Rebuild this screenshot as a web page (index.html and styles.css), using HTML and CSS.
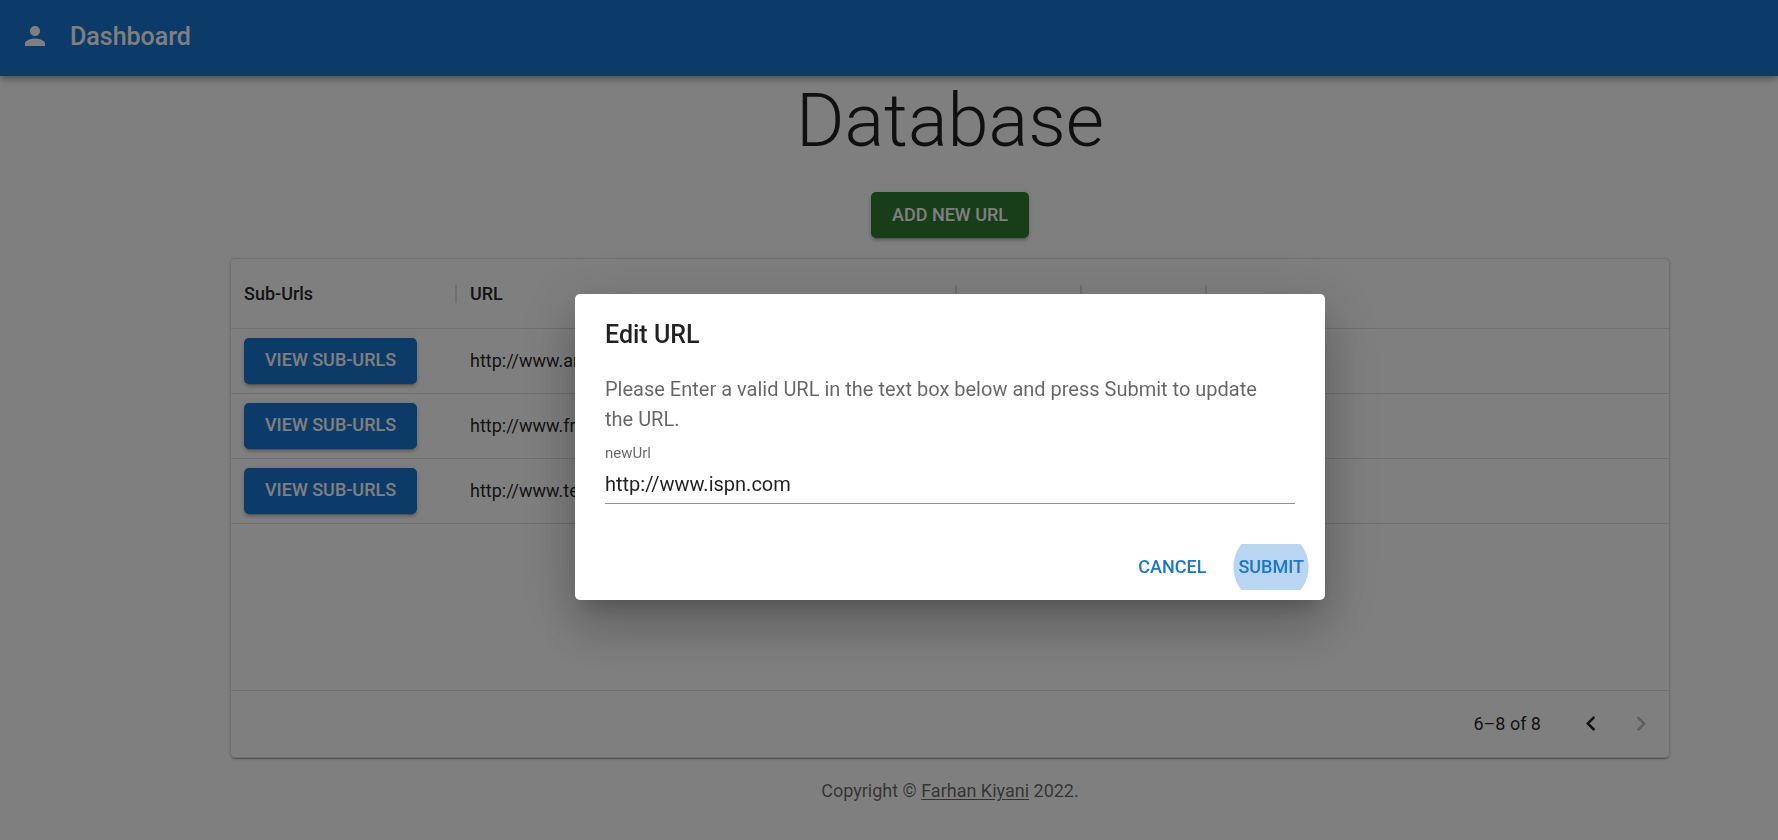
FILE: index.html
```html
<!DOCTYPE html>
<html lang="en">
<head>
<meta charset="utf-8">
<meta name="viewport" content="width=device-width, initial-scale=1">
<title>Dashboard</title>
<link rel="stylesheet" href="styles.css">
</head>
<body>
<header class="app-bar">
  <svg class="icon" viewBox="0 0 24 24" aria-hidden="true"><path d="M12 12c2.21 0 4-1.79 4-4s-1.79-4-4-4-4 1.79-4 4 1.79 4 4 4zm0 2c-2.67 0-8 1.34-8 4v2h16v-2c0-2.66-5.33-4-8-4z"/></svg>
  <span class="app-title">Dashboard</span>
</header>
<main class="page">
  <h1 class="heading">Database</h1>
  <button type="button" class="btn btn-success">ADD NEW URL</button>
  <section class="card">
    <div class="grid-body">
      <table class="grid">
        <colgroup><col class="col-sub"><col class="col-url"><col class="col-small"><col class="col-small"><col></colgroup>
        <thead>
          <tr>
            <th scope="col"><div class="head-cell"><span>Sub-Urls</span></div></th>
            <th scope="col"><div class="head-cell"><span>URL</span></div></th>
            <th scope="col"><div class="head-cell"><span></span></div></th>
            <th scope="col"><div class="head-cell"><span></span></div></th>
            <th></th>
          </tr>
        </thead>
        <tbody>
          <tr><td><button type="button" class="btn btn-primary">VIEW SUB-URLS</button></td><td>http://www.ar</td><td></td><td></td><td></td></tr>
          <tr><td><button type="button" class="btn btn-primary">VIEW SUB-URLS</button></td><td>http://www.fre</td><td></td><td></td><td></td></tr>
          <tr><td><button type="button" class="btn btn-primary">VIEW SUB-URLS</button></td><td>http://www.te</td><td></td><td></td><td></td></tr>
        </tbody>
      </table>
    </div>
    <div class="pagination">
      <span class="range">6–8 of 8</span>
      <button type="button" class="icon-btn" aria-label="Previous page"><svg class="icon" viewBox="0 0 24 24" aria-hidden="true"><path d="M15.41 16.09l-4.58-4.59 4.58-4.59L14 5.5l-6 6 6 6z"/></svg></button>
      <button type="button" class="icon-btn" aria-label="Next page" disabled><svg class="icon" viewBox="0 0 24 24" aria-hidden="true"><path d="M8.59 16.34l4.58-4.59-4.58-4.59L10 5.75l6 6-6 6z"/></svg></button>
    </div>
  </section>
  <footer class="copyright">Copyright © <a href="#">Farhan Kiyani</a> 2022.</footer>
</main>
<div class="backdrop">
  <form class="dialog" role="dialog" aria-modal="true" aria-labelledby="dialog-title">
    <h2 class="dialog-title" id="dialog-title">Edit URL</h2>
    <div class="dialog-content">
      <p class="dialog-text">Please Enter a valid URL in the text box below and press Submit to update the URL.</p>
      <label class="field-label" for="new-url">newUrl</label>
      <input class="field" id="new-url" type="text" value="http://www.ispn.com">
    </div>
    <div class="dialog-actions">
      <button type="button" class="btn btn-text">CANCEL</button>
      <button type="button" class="btn btn-text btn-ripple">SUBMIT</button>
    </div>
  </form>
</div>
</body>
</html>
```
FILE: styles.css
```css
* { box-sizing: border-box; }

:root {
  --page-inset: 122px;
  --text: rgba(0, 0, 0, 0.87);
  --muted: rgba(0, 0, 0, 0.6);
  --line: #e0e0e0;
  --primary: #1976d2;
}

body {
  margin: 0;
  background: #fff;
  color: var(--text);
  font-family: Roboto, "Liberation Sans", sans-serif;
  font-size: 18px;
}

.icon {
  display: block;
  width: 30px;
  height: 30px;
  fill: currentColor;
}

.app-bar {
  position: relative;
  display: flex;
  align-items: center;
  gap: 20px;
  height: 76px;
  padding: 0 20px 4px;
  background: var(--primary);
  color: #fff;
  box-shadow: 0 2px 5px -1px rgba(0, 0, 0, 0.2), 0 5px 6px rgba(0, 0, 0, 0.14), 0 1px 12px rgba(0, 0, 0, 0.12);
}

.app-title {
  font-size: 25px;
  font-weight: 500;
}

.page {
  display: flex;
  flex-direction: column;
  align-items: center;
  padding-left: var(--page-inset);
}

.heading {
  margin: 0 0 26px;
  font-size: 74px;
  font-weight: 300;
  line-height: 90px;
}

.btn {
  height: 46px;
  padding: 0 21px 2px;
  border: 0;
  border-radius: 5px;
  color: #fff;
  font-family: inherit;
  font-size: 18px;
  font-weight: 500;
  white-space: nowrap;
  box-shadow: 0 4px 1px -3px rgba(0, 0, 0, 0.2), 0 3px 3px rgba(0, 0, 0, 0.14), 0 1px 6px rgba(0, 0, 0, 0.12);
}

.btn-success { background: #2e7d32; }

.btn-primary {
  display: block;
  background: var(--primary);
}

.card {
  width: calc(100% - 108px);
  max-width: 1440px;
  margin-top: 20px;
  margin-right: auto;
  margin-left: auto;
  border: 1px solid var(--line);
  border-radius: 5px;
  box-shadow: 0 3px 1px -2px rgba(0, 0, 0, 0.2), 0 1px 1px rgba(0, 0, 0, 0.14), 0 1px 4px rgba(0, 0, 0, 0.12);
}

.grid-body { min-height: 431px; }

.grid {
  width: 100%;
  table-layout: fixed;
  border-collapse: separate;
  border-spacing: 0;
}

.col-sub { width: 226px; }
.col-url { width: 500px; }
.col-small { width: 125px; }

.grid th,
.grid td {
  padding: 0 0 0 13px;
  border-bottom: 1px solid var(--line);
  text-align: left;
}

.grid th {
  height: 70px;
  font-weight: 500;
}

.grid td {
  height: 65px;
  padding-bottom: 1px;
}

.head-cell {
  display: flex;
  align-items: center;
  justify-content: space-between;
}

.head-cell::after {
  content: "";
  width: 2px;
  height: 18px;
  background: var(--line);
}

.pagination {
  display: flex;
  align-items: center;
  justify-content: flex-end;
  height: 67px;
  padding-right: 3px;
  padding-bottom: 1px;
  border-top: 1px solid var(--line);
}

.range { margin-right: 25px; }

.icon-btn {
  padding: 10px;
  border: 0;
  background: none;
  color: var(--text);
}

.icon-btn:disabled { color: rgba(0, 0, 0, 0.26); }

.copyright {
  margin-top: 20px;
  color: var(--muted);
  line-height: 25px;
}

.copyright a {
  color: inherit;
  text-underline-offset: 2px;
}

.backdrop {
  position: fixed;
  inset: 0;
  display: flex;
  align-items: flex-start;
  justify-content: center;
  padding: 294px 0 0 var(--page-inset);
  background: rgba(0, 0, 0, 0.5);
}

.dialog {
  width: 100%;
  max-width: 750px;
  border-radius: 5px;
  background: #fff;
  box-shadow: 0 14px 19px -9px rgba(0, 0, 0, 0.2), 0 30px 48px 4px rgba(0, 0, 0, 0.14), 0 11px 58px 10px rgba(0, 0, 0, 0.12);
}

.dialog-title {
  margin: 0;
  padding: 21px 30px 19px;
  font-size: 25px;
  font-weight: 500;
  line-height: 40px;
}

.dialog-content { padding: 0 30px 30px; }

.dialog-text {
  margin: 0;
  padding-right: 20px;
  color: var(--muted);
  font-size: 20px;
  line-height: 30px;
}

.field-label {
  display: block;
  margin-top: 10px;
  color: var(--muted);
  font-size: 15px;
  line-height: 18px;
}

.field {
  display: block;
  width: 100%;
  height: 42px;
  padding: 2px 0 0;
  border: 0;
  border-bottom: 1px solid rgba(0, 0, 0, 0.42);
  outline: 0;
  background: none;
  color: var(--text);
  font-family: inherit;
  font-size: 20px;
}

.dialog-actions {
  display: flex;
  justify-content: flex-end;
  gap: 10px;
  padding: 10px;
}

.btn-text {
  padding: 0 11px 2px;
  background: none;
  color: var(--primary);
  box-shadow: none;
}

.btn-ripple {
  background: radial-gradient(circle, rgba(25, 118, 210, 0.3) 37px, transparent 38px);
}
```
